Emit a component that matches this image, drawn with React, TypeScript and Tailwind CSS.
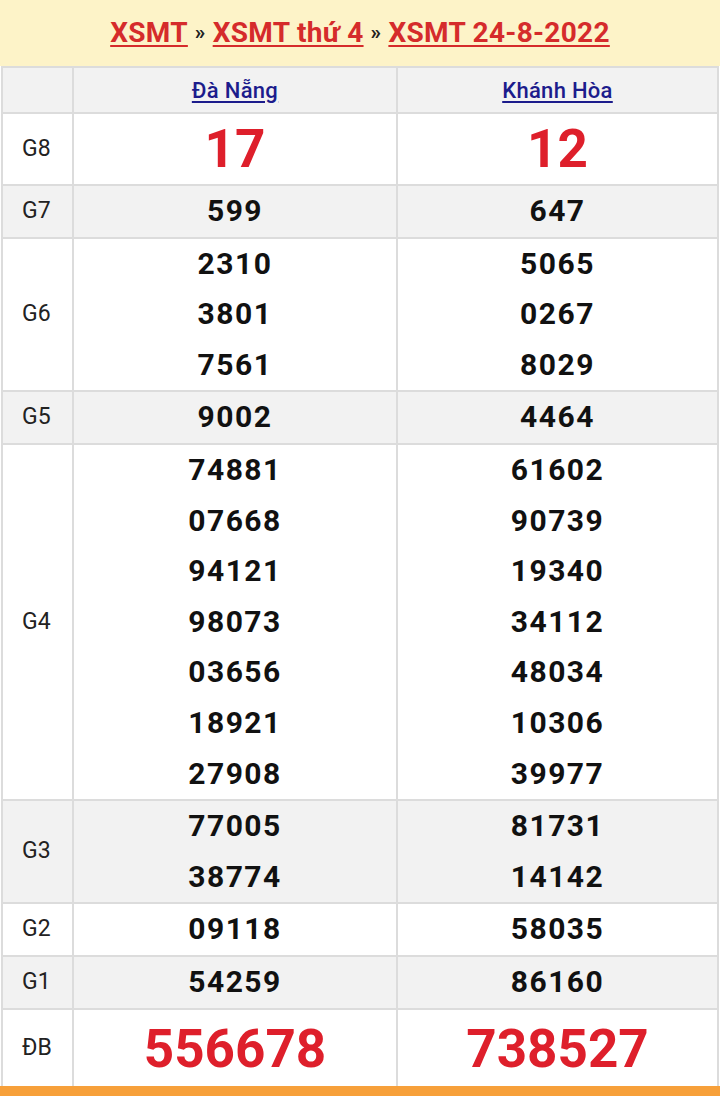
import React from "react";

type Row = { label: string; a: string[]; b: string[]; kind?: "big" | "db"; gray?: boolean };

const rows: Row[] = [
  { label: "G8", a: ["17"], b: ["12"], kind: "big" },
  { label: "G7", a: ["599"], b: ["647"], gray: true },
  { label: "G6", a: ["2310", "3801", "7561"], b: ["5065", "0267", "8029"] },
  { label: "G5", a: ["9002"], b: ["4464"], gray: true },
  {
    label: "G4",
    a: ["74881", "07668", "94121", "98073", "03656", "18921", "27908"],
    b: ["61602", "90739", "19340", "34112", "48034", "10306", "39977"],
  },
  { label: "G3", a: ["77005", "38774"], b: ["81731", "14142"], gray: true },
  { label: "G2", a: ["09118"], b: ["58035"] },
  { label: "G1", a: ["54259"], b: ["86160"], gray: true },
  { label: "ĐB", a: ["556678"], b: ["738527"], kind: "db" },
];

function Cell({ nums, kind }: { nums: string[]; kind?: "big" | "db" }) {
  if (kind === "big") {
    return (
      <div className="flex-1 flex items-center justify-center h-[70px] text-[53px] font-bold text-[#de1f2b] leading-none">
        {nums[0]}
      </div>
    );
  }
  if (kind === "db") {
    return (
      <div className="flex-1 flex items-center justify-center h-[77px] text-[53px] font-bold text-[#de1f2b] leading-none pt-[2px]">
        {nums[0]}
      </div>
    );
  }
  return (
    <div className="flex-1 flex flex-col items-center">
      {nums.map((n, i) => (
        <div key={i} className="h-[50.6px] leading-[50.6px] text-[30px] font-bold text-[#111] tracking-[1.5px]">
          {n}
        </div>
      ))}
    </div>
  );
}

export default function App() {
  return (
    <div className="w-[720px] h-[1096px] bg-white flex flex-col" style={{ fontFamily: "Roboto, 'Noto Sans', sans-serif" }}>
      <div className="shrink-0 h-[66px] bg-[#fdf3c8] flex items-center justify-center text-[28px] font-bold text-[#d52b2b] tracking-[0.3px]">
        <a className="underline decoration-[2px] underline-offset-[3px]">XSMT</a>
        <span className="mx-[7px] text-[#222] text-[21px]">»</span>
        <a className="underline decoration-[2px] underline-offset-[3px]">XSMT thứ 4</a>
        <span className="mx-[7px] text-[#222] text-[21px]">»</span>
        <a className="underline decoration-[2px] underline-offset-[3px]">XSMT 24-8-2022</a>
      </div>
      <div className="mx-[1px] border-x-2 border-[#dcdcdc] flex-1 flex flex-col min-h-0">
        <div className="shrink-0 flex h-[46px] border-t-2 border-[#dcdcdc] bg-[#f2f2f2]">
          <div className="w-[71px] border-r-2 border-[#dcdcdc]" />
          <div className="w-[324px] border-r-2 border-[#dcdcdc] flex items-center justify-center text-[22px] tracking-[0.3px] font-medium text-[#1c1c8c] underline underline-offset-[3px]">
            Đà Nẵng
          </div>
          <div className="flex-1 flex items-center justify-center text-[22px] tracking-[0.3px] font-medium text-[#1c1c8c] underline underline-offset-[3px]">
            Khánh Hòa
          </div>
        </div>
        {rows.map((r) => (
          <div
            key={r.label}
            className={`shrink-0 flex border-t-2 border-[#dcdcdc] ${r.gray ? "bg-[#f2f2f2]" : "bg-white"}`}
          >
            <div className="w-[71px] border-r-2 border-[#dcdcdc] flex items-center pl-[19px] text-[23px] text-[#222]">
              {r.label}
            </div>
            <div className="w-[324px] border-r-2 border-[#dcdcdc] flex">
              <Cell nums={r.a} kind={r.kind} />
            </div>
            <div className="flex-1 flex">
              <Cell nums={r.b} kind={r.kind} />
            </div>
          </div>
        ))}
        <div className="flex-1" />
      </div>
      <div className="shrink-0 h-[10px] bg-[#f7a03a]" />
    </div>
  );
}
